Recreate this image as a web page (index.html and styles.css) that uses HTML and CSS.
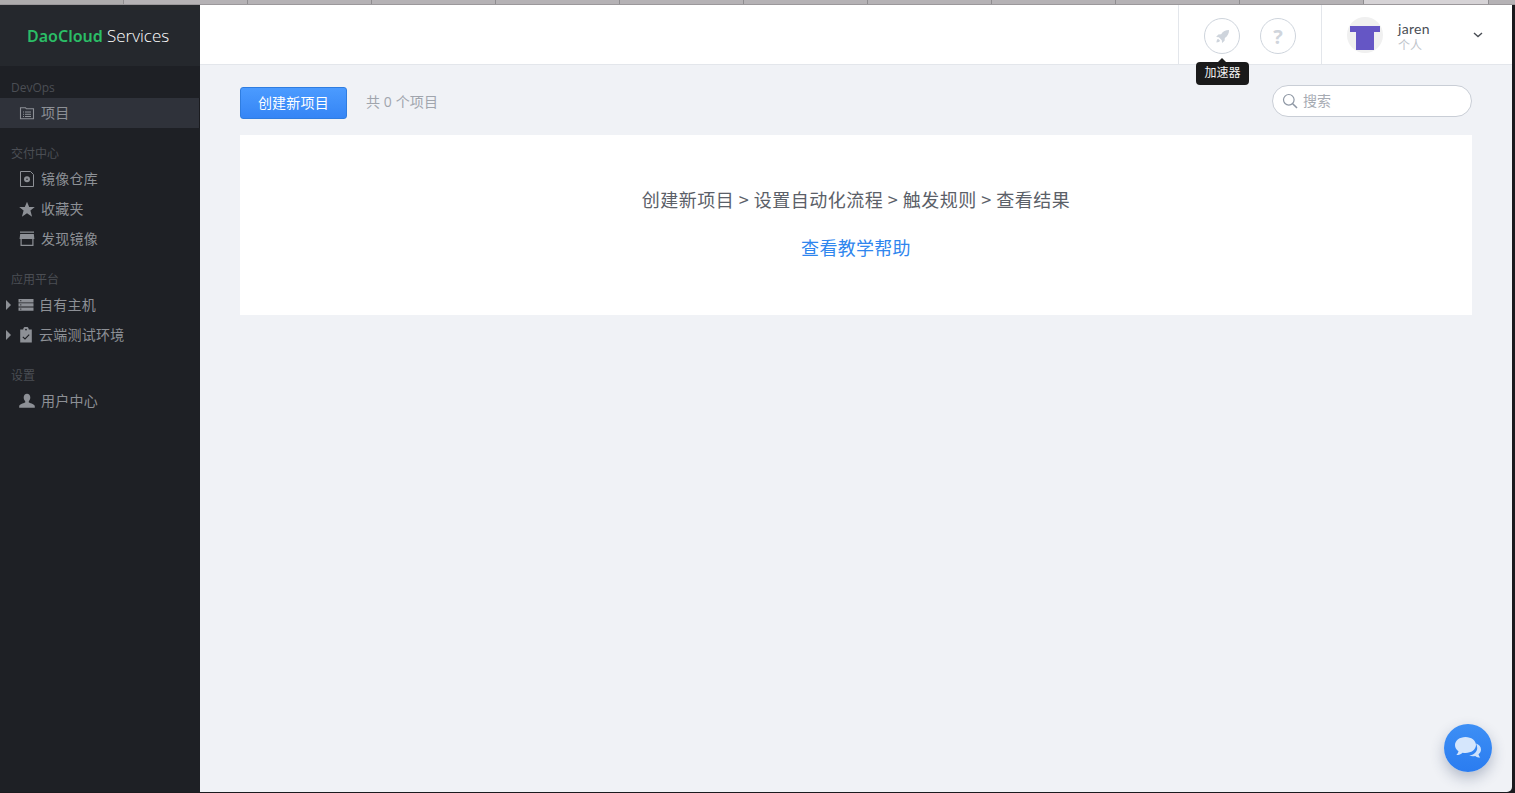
FILE: index.html
```html
<!DOCTYPE html>
<html lang="zh">
<head>
<meta charset="utf-8">
<title>DaoCloud Services</title>
<link rel="stylesheet" href="styles.css">
</head>
<body>
<div class="tabstrip">
  <span class="tab"></span><span class="tab"></span><span class="tab"></span><span class="tab"></span><span class="tab"></span><span class="tab"></span><span class="tab"></span><span class="tab"></span><span class="tab"></span><span class="tab"></span><span class="tab"></span><span class="tab tab-active"></span>
</div>
<div class="window">
  <aside class="sidebar">
    <div class="logo"><b>DaoCloud</b> <span class="logo-light">Services</span></div>
    <section class="group group-first">
      <div class="group-label">DevOps</div>
      <a class="item item-active">
        <svg class="ico" viewBox="0 0 16 16"><path d="M1.500 3.500V2.800h5l1 1h7v10h-13z" fill="none" stroke="currentColor" stroke-width="1.100"/><path d="M4 7h1M6 7h6M4 9.300h1M6 9.300h6M4 11.500h1M6 11.500h6" stroke="currentColor" stroke-width="1"/></svg>
        <span class="label">项目</span>
      </a>
    </section>
    <section class="group">
      <div class="group-label">交付中心</div>
      <a class="item">
        <svg class="ico" viewBox="0 0 16 16"><path d="M1.500 .5h10l3 3v12h-13z" fill="none" stroke="currentColor" stroke-width="1"/><circle cx="8" cy="8.200" r="3" fill="currentColor"/><circle cx="8" cy="8.200" r=".8" fill="#1e2025"/></svg>
        <span class="label">镜像仓库</span>
      </a>
      <a class="item">
        <svg class="ico" viewBox="0 0 16 16"><path d="M8 .8l2.200 5.200h5.600l-4.400 3.500 1.700 6.200L8 12.200l-5.100 3.500 1.700-6.200L.2 6h5.600z" fill="currentColor"/></svg>
        <span class="label">收藏夹</span>
      </a>
      <a class="item">
        <svg class="ico" viewBox="0 0 16 16"><path d="M1 .5h14v1.200H1z" fill="currentColor"/><path d="M1.200 3h13.600L15.400 8H.6z" fill="currentColor"/><path d="M1.500 8v7h13V8h-1.200v5.700H2.700V8z" fill="currentColor"/></svg>
        <span class="label">发现镜像</span>
      </a>
    </section>
    <section class="group">
      <div class="group-label">应用平台</div>
      <a class="item item-tree">
        <i class="caret"></i>
        <svg class="ico" viewBox="0 0 16 16"><path d="M.5 2h15v3.400H.5zM.5 6.200h15v3.400H.5zM.5 10.400h15v3.400H.5z" fill="currentColor"/><path d="M2 3.700h1.400M2 7.900h1.400M2 12.100h1.400" stroke="#1e2025" stroke-width=".8"/></svg>
        <span class="label">自有主机</span>
      </a>
      <a class="item item-tree">
        <i class="caret"></i>
        <svg class="ico" viewBox="0 0 16 16"><path d="M2.200 2.500h3a2.800 2.800 0 0 1 5.600 0h3v13H2.200z" fill="currentColor"/><circle cx="8" cy="2.600" r=".9" fill="#1e2025"/><path d="M4.800 9.800l2.200 2.200 4.200-4.400" fill="none" stroke="#1e2025" stroke-width="1.100"/></svg>
        <span class="label">云端测试环境</span>
      </a>
    </section>
    <section class="group">
      <div class="group-label">设置</div>
      <a class="item">
        <svg class="ico" viewBox="0 0 16 16"><path d="M8 .8c2 0 3.300 1.500 3.300 3.700 0 1.700-.8 3-1.500 3.700v1.300c2.200.8 6 1.800 6 3.800v1.500H.2v-1.500c0-2 3.800-3 6-3.800V8.200C5.500 7.500 4.700 6.200 4.700 4.500 4.700 2.300 6 .8 8 .8z" fill="currentColor"/></svg>
        <span class="label">用户中心</span>
      </a>
    </section>
  </aside>
  <div class="main">
    <header class="topbar">
      <div class="top-actions">
        <div class="round-btn">
          <svg class="rocket" viewBox="0 0 16 16"><path d="M15 1c-3.800 0-6.500 1.500-8.500 4.500L3.500 5.800 1.200 8.400l2.900.4 3.100 3.100.4 2.900 2.600-2.300.3-3C13.500 7.500 15 4.800 15 1z" fill="currentColor"/><path d="M3.300 10.500c-1 .6-1.600 1.800-1.800 3.900 2.100-.2 3.300-.8 3.900-1.800z" fill="currentColor"/></svg>
          <div class="tooltip">加速器</div>
        </div>
        <div class="round-btn round-help">?</div>
      </div>
      <div class="user">
        <div class="avatar">
          <svg viewBox="0 0 36 36"><path d="M3 9h30v6h-6v18H9V15H3z" fill="#6556c5"/></svg>
        </div>
        <div class="user-text">
          <div class="user-name">jaren</div>
          <div class="user-org">个人</div>
        </div>
        <svg class="chevron" viewBox="0 0 10 6"><path d="M1 1l4 3.600L9 1" fill="none" stroke="#4a4e55" stroke-width="1.400"/></svg>
      </div>
    </header>
    <main class="content">
      <div class="toolbar">
        <button class="btn-primary">创建新项目</button>
        <span class="count">共 0 个项目</span>
        <label class="search">
          <svg viewBox="0 0 16 16"><circle cx="6.800" cy="6.800" r="5.300" fill="none" stroke="#8f98a5" stroke-width="1.200"/><path d="M10.700 10.700l4.300 4.300" stroke="#8f98a5" stroke-width="1.600"/></svg>
          <span class="label">搜索</span>
        </label>
      </div>
      <div class="card">
        <p class="steps">创建新项目 &gt; 设置自动化流程 &gt; 触发规则 &gt; 查看结果</p>
        <a class="help-link">查看教学帮助</a>
      </div>
    </main>
    <div class="chat">
      <svg viewBox="0 0 28 24"><path d="M22 7.500c3 1 5 3.200 5 6 0 2-1 3.600-2.500 4.800.2 1.200.8 2.300 1.700 3.200-2 0-3.700-.6-5-1.600-2 .5-4.300.3-6-.4 4.500-.3 8-3.700 8-7.500 0-1.600-.5-3.100-1.200-4.500z" fill="#cfe2fb"/><path d="M11.500 1C17.300 1 22 4.600 22 9s-4.700 8-10.500 8c-1 0-2-.1-2.900-.3C7.100 18.200 4.800 19 2.300 19c1.100-1 1.900-2.300 2.200-3.700C2.300 13.900 1 11.600 1 9c0-4.400 4.700-8 10.500-8z" fill="#d5e6fc"/></svg>
    </div>
  </div>
</div>
</body>
</html>
```

FILE: styles.css
```css
* { box-sizing: border-box; }
html, body { height: 100%; }
body {
  margin: 0;
  background: #1b1a1e;
  overflow: hidden;
  font-family: "Open Sans", "Noto Sans CJK SC", sans-serif;
  display: flex;
  flex-direction: column;
  height: 793px;
}
.tabstrip {
  height: 5px;
  flex: none;
  display: flex;
  background: #b5b2b5;
  border-bottom: 1px solid #9b989b;
}
.tab {
  width: 124px;
  flex: none;
  border-right: 1px solid #8f8d90;
}
.tab:first-child { background: #aeacad; }
.tab-active { width: 125px; background: #d6d3d6; }
.window {
  width: 1512px;
  height: 787px;
  flex: none;
  display: flex;
  overflow: hidden;
  border-bottom-right-radius: 5px;
}
.sidebar {
  width: 200px;
  flex: none;
  background: #1e2025;
  color: #8d9096;
}
.logo {
  height: 61px;
  background: #25282d;
  color: #eceef0;
  font-family: "Noto Sans", sans-serif;
  font-size: 16px;
  line-height: 61px;
  padding-left: 27px;
  white-space: nowrap;
}
.logo b { color: #2bbd66; font-weight: 600; }
.logo-light {
  font-family: "Open Sans", sans-serif;
  font-size: 17px;
  font-weight: 300;
  color: #fff;
}
.group { margin-top: 14px; }
.group-first { margin-top: 10px; }
.group-label {
  height: 22px;
  line-height: 24px;
  padding-left: 11px;
  font-size: 12px;
  color: #4b4e54;
}
.item {
  height: 30px;
  display: flex;
  align-items: center;
  padding-left: 19px;
  font-size: 14px;
  letter-spacing: .25px;
  color: #8d9096;
}
.label { margin-bottom: 2px; }
.item-active {
  background: #2f323a;
  border-right: 1px solid #1b1c20;
}
.item-tree { padding-left: 6px; }
.ico {
  width: 16px;
  height: 16px;
  flex: none;
  margin-right: 6px;
}
.item-tree .ico { margin-left: 6px; margin-right: 5px; }
.caret {
  width: 0;
  height: 0;
  flex: none;
  border-left: 5px solid #8d9096;
  border-top: 5px solid transparent;
  border-bottom: 5px solid transparent;
  margin-right: 1px;
}
.main {
  flex: 1;
  min-width: 0;
  display: flex;
  flex-direction: column;
  background: #f0f2f6;
  position: relative;
}
.topbar {
  height: 60px;
  flex: none;
  background: #fff;
  border-bottom: 1px solid #e3e6eb;
  display: flex;
  justify-content: flex-end;
}
.top-actions {
  width: 143px;
  display: flex;
  gap: 20px;
  padding: 13px 0 0 25px;
  border-left: 1px solid #e3e6eb;
}
.round-btn {
  width: 36px;
  height: 36px;
  border: 1px solid #ced4dc;
  border-radius: 50%;
  display: flex;
  align-items: center;
  justify-content: center;
  position: relative;
  color: #ced4dc;
  background: #fff;
}
.rocket { width: 15px; height: 15px; }
.round-help {
  font-size: 20px;
  font-weight: 700;
  color: #d0d5dc;
}
.tooltip {
  position: absolute;
  left: -9px;
  top: 43px;
  width: 53px;
  height: 23px;
  background: #1a1a1a;
  color: #f2f2f2;
  border-radius: 4px;
  font-size: 12px;
  line-height: 21px;
  text-align: center;
  z-index: 2;
}
.tooltip::before {
  content: "";
  position: absolute;
  left: 22px;
  top: -4px;
  border-left: 4px solid transparent;
  border-right: 4px solid transparent;
  border-bottom: 4px solid #1a1a1a;
}
.user {
  width: 191px;
  display: flex;
  align-items: flex-start;
  padding: 12px 0 0 25px;
  border-left: 1px solid #e3e6eb;
}
.avatar {
  width: 36px;
  height: 36px;
  flex: none;
  border-radius: 50%;
  background: #f0f0f0;
  overflow: hidden;
}
.avatar svg { display: block; width: 36px; height: 36px; }
.user-text {
  width: 75px;
  flex: none;
  margin-left: 15px;
}
.user-name {
  font-family: "Lato", "Noto Sans CJK SC", sans-serif;
  font-size: 14px;
  line-height: 17px;
  margin-top: 3px;
  color: #4a4e55;
  letter-spacing: .3px;
}
.user-org {
  font-size: 12px;
  line-height: 14px;
  margin-top: 2px;
  color: #c0c5cc;
}
.chevron {
  width: 10px;
  height: 6px;
  flex: none;
  margin-top: 15px;
}
.content {
  flex: 1;
  padding: 20px 40px 0;
}
.toolbar {
  height: 50px;
  display: flex;
  align-items: flex-start;
}
.btn-primary {
  width: 107px;
  height: 32px;
  margin-top: 2px;
  padding: 0 0 2px;
  border: 1px solid #2f7de0;
  border-radius: 3px;
  background: linear-gradient(#4b9bff, #3585f5);
  color: #fff;
  font-family: "Noto Sans CJK SC", sans-serif;
  font-size: 14px;
  letter-spacing: .25px;
}
.count {
  margin-left: 19px;
  margin-top: 2px;
  line-height: 30px;
  font-size: 14px;
  letter-spacing: .1px;
  color: #a0a5ad;
}
.search {
  width: 200px;
  height: 32px;
  margin-left: auto;
  border: 1px solid #c9ced6;
  border-radius: 16px;
  background: #fff;
  display: flex;
  align-items: center;
  padding-left: 9px;
  font-size: 14px;
  color: #a6abb3;
}
.search svg { width: 16px; height: 16px; margin-right: 5px; flex: none; }
.card {
  height: 180px;
  background: #fff;
  text-align: center;
  padding-top: 51px;
  letter-spacing: .3px;
}
.steps {
  margin: 0;
  font-size: 18px;
  line-height: 26px;
  letter-spacing: .5px;
  color: #5b6068;
  font-family: "Noto Sans CJK SC", sans-serif;
}
.help-link {
  display: block;
  margin-top: 23px;
  font-size: 18px;
  line-height: 26px;
  color: #2f86ee;
}
.chat {
  position: absolute;
  right: 20px;
  bottom: 20px;
  width: 48px;
  height: 48px;
  border-radius: 50%;
  background: linear-gradient(#3d8ff5, #2a7cf0);
  box-shadow: 0 6px 14px rgba(40, 60, 100, .3);
  display: flex;
  align-items: center;
  justify-content: center;
}
.chat svg { width: 28px; height: 24px; }
```
